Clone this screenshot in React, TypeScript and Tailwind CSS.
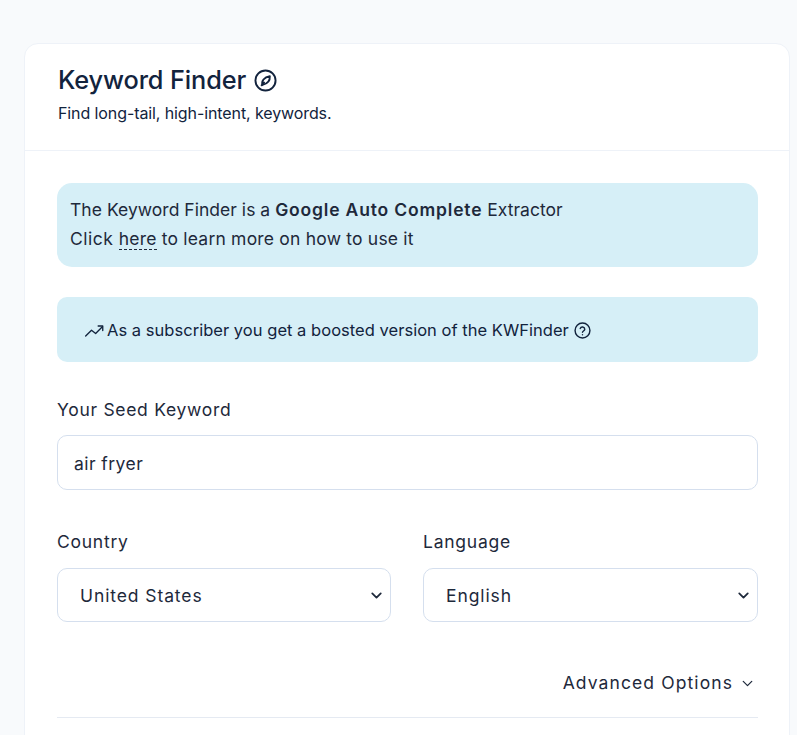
import { ChevronDown } from "lucide-react";

const font = { fontFamily: "Inter" };

function Field({ label, value }: { label: string; value: string }) {
  return (
    <div className="min-w-0">
      <label className="block text-[17.5px] leading-[24px] tracking-[0.75px] text-[#1e293b] mb-[14px]">{label}</label>
      <div className="relative">
        <select
          defaultValue={value}
          className="appearance-none w-full h-[54px] pl-[22px] pr-8 pt-[2px] rounded-[10px] border border-[#d5dfee] bg-white text-[17.5px] tracking-[0.9px] text-[#1e293b]"
        >
          <option>{value}</option>
        </select>
        <ChevronDown size={17} strokeWidth={2.5} className="absolute right-[6px] top-[19px] text-[#1e293b] pointer-events-none" />
      </div>
    </div>
  );
}

export default function App() {
  return (
    <div className="h-[735px] overflow-hidden bg-[#f8fafc] pt-[43px] pl-[24px] pr-[7px]" style={font}>
      <div className="bg-white rounded-t-[14px] border border-[#eef2f8] h-[760px]">
        <div className="h-[107px] border-b border-[#eef2f8] px-[33px] pt-[19px]">
          <div className="flex items-center gap-[8px] text-[25.3px] leading-[34px] font-medium tracking-[-0.1px] text-[#12233d]">
            Keyword Finder
            <svg width="23" height="23" viewBox="0 0 24 24" fill="none" stroke="#12233d" strokeWidth="2" strokeLinejoin="round">
              <circle cx="12" cy="12" r="10.5" />
              <path d="M16.5 7.5c.3 4.5-2.5 8-7.5 9-1.6-3.8 1.5-8 7.5-9Z" />
              <path d="M7.5 17.5l3.5-4" />
            </svg>
          </div>
          <p className="mt-[4px] text-[16px] leading-[24px] tracking-[-0.1px] text-[#12233d]">Find long-tail, high-intent, keywords.</p>
        </div>
        <div className="pl-[32px] pr-[31px] pt-[32px]">
          <div className="h-[84px] rounded-[15px] bg-[#d6eff7] px-[13px] pt-[12px] text-[17.5px] leading-[29px] text-[#1e293b]">
            <div className="tracking-[0.03px]">
              The Keyword Finder is a <b className="font-semibold tracking-[0.82px]">Google Auto Complete</b> Extractor
            </div>
            <div className="tracking-[0.2px]">
              <span className="tracking-[0.5px]">Click </span>
              <span className="border-b border-dashed border-[#1e293b]">here</span> to learn more on how to use it
            </div>
          </div>
          <div className="mt-[30px] h-[65px] rounded-[10px] bg-[#d6eff7] pl-[27px] pt-[2px] flex items-center gap-[3px] text-[16.5px] tracking-[0.03px] text-[#12233d]">
            <svg width="20" height="20" viewBox="0 0 24 24" fill="none" stroke="#12233d" strokeWidth="1.6" strokeLinecap="round" strokeLinejoin="round">
              <path d="M2 18l7-7 5 4 8-8" />
              <path d="M17 6h5.5v5.5" />
            </svg>
            As a subscriber you get a boosted version of the KWFinder
            <svg className="ml-[2px]" width="17" height="17" viewBox="0 0 24 24" fill="none" stroke="#12233d" strokeWidth="2" strokeLinecap="round" strokeLinejoin="round">
              <circle cx="12" cy="12" r="10.5" />
              <path d="M8.8 9.2a3.3 3.3 0 0 1 6.4 1c0 2.2-3.2 2.6-3.2 4.2" />
              <path d="M12 18h.01" />
            </svg>
          </div>
          <label className="block mt-[36px] text-[17.5px] leading-[24px] tracking-[0.7px] text-[#1e293b]">Your Seed Keyword</label>
          <input
            readOnly
            value="air fryer"
            className="block mt-[13px] w-full h-[55px] px-[16px] pt-[1px] rounded-[10px] border border-[#d5dfee] text-[17.5px] tracking-[0.45px] text-[#1e293b]"
          />
          <div className="mt-[40px] grid grid-cols-[334px_1fr] gap-[32px]">
            <Field label="Country" value="United States" />
            <Field label="Language" value="English" />
          </div>
          <div className="mt-[49px] flex items-center justify-end gap-[6px] pr-[2px] text-[17.5px] leading-[24px] tracking-[1.1px] text-[#1e293b]">
            Advanced Options
            <ChevronDown size={17} strokeWidth={1.75} />
          </div>
          <div className="mt-[22px] border-t border-[#e5eaf2]" />
        </div>
      </div>
    </div>
  );
}
